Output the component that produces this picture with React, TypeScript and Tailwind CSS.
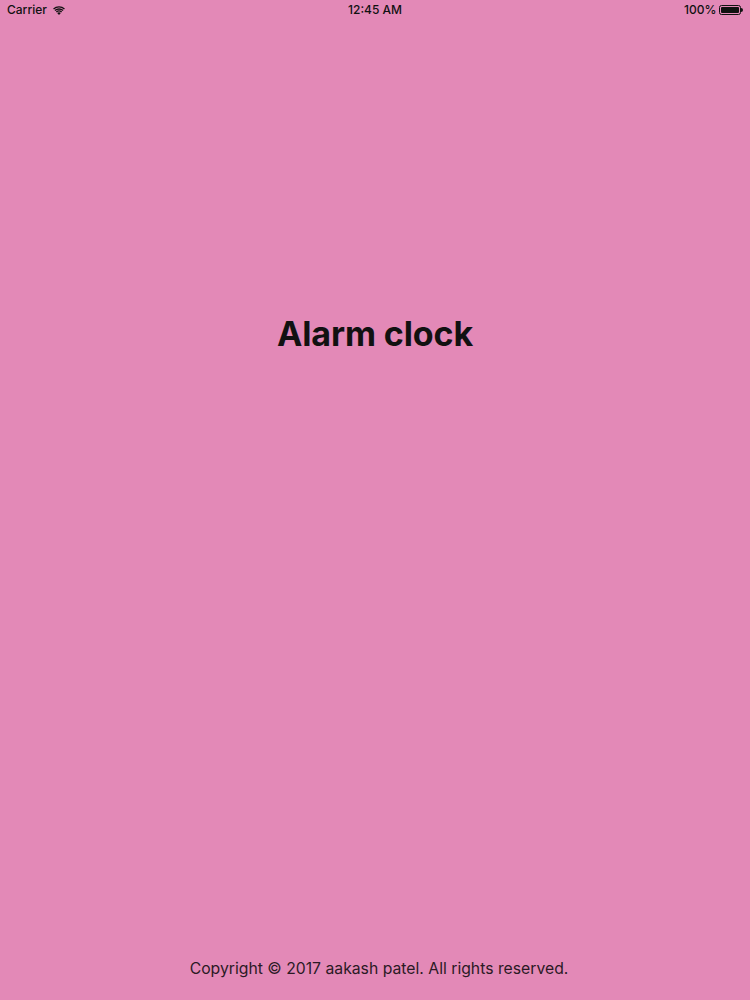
export default function App() {
  return (
    <div
      className="flex h-[1000px] w-[750px] flex-col bg-[#e389b7] text-[#111]"
      style={{ fontFamily: 'Inter, "Liberation Sans", sans-serif' }}
    >
      {/* Status bar */}
      <div className="flex h-5 items-center justify-between px-[7px] text-[12px] font-medium">
        <div className="flex flex-1 items-center gap-[6px]">
          <span>Carrier</span>
          <svg width="12" height="9" viewBox="0 0 12 9" fill="#111">
            <path d="M6 9 L4.2 7 A2.6 2.6 0 0 1 7.8 7 Z" />
            <path d="M2.9 5.6 A4.6 4.6 0 0 1 9.1 5.6 L8.2 6.6 A3.3 3.3 0 0 0 3.8 6.6 Z" />
            <path d="M1.5 4.1 A6.6 6.6 0 0 1 10.5 4.1 L9.6 5.1 A5.3 5.3 0 0 0 2.4 5.1 Z" />
            <path d="M0.1 2.6 A8.6 8.6 0 0 1 11.9 2.6 L11 3.6 A7.3 7.3 0 0 0 1 3.6 Z" />
          </svg>
        </div>
        <span className="flex-1 text-center">12:45 AM</span>
        <div className="flex flex-1 items-center justify-end gap-[3px]">
          <span>100%</span>
          <div className="flex items-center">
            <div className="h-[10px] w-[22px] rounded-[2.5px] border border-[#111] p-[1px]">
              <div className="h-full w-full rounded-[1px] bg-[#111]" />
            </div>
            <div className="h-[4px] w-[1.5px] rounded-r-sm bg-[#111]" />
          </div>
        </div>
      </div>

      {/* Main */}
      <div className="flex flex-1 flex-col items-center pt-[294px]">
        <h1 className="text-[34px] font-bold leading-10 tracking-[-0.1px]">Alarm clock</h1>
      </div>

      {/* Footer */}
      <div className="pb-[19px] pl-[8px] text-center text-[15.75px] text-[#2b1a25]">
        Copyright © 2017 aakash patel. All rights reserved.
      </div>
    </div>
  );
}
